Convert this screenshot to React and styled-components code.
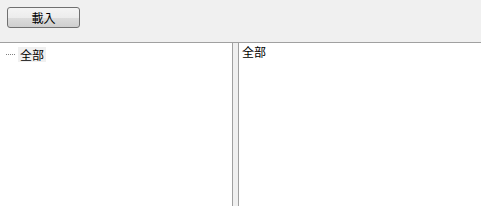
import React from "react";
import styled, { createGlobalStyle } from "styled-components";

const GlobalStyle = createGlobalStyle`
  html, body {
    margin: 0;
    padding: 0;
    background: #ffffff;
  }
  body {
    font-family: "Noto Sans CJK SC", "Noto Sans CJK TC", sans-serif;
    font-size: 12px;
    color: #000;
  }
`;

const Window = styled.div`
  width: 481px;
  height: 216px;
  display: flex;
  flex-direction: column;
  background: #ffffff;
`;

const Toolbar = styled.div`
  height: 43px;
  box-sizing: border-box;
  padding: 7px 0 0 7px;
  background: #f0f0f0;
  border-bottom: 1px solid #a0a0a0;
`;

const Button = styled.button`
  display: block;
  width: 73px;
  height: 21px;
  padding: 0;
  border: 1px solid #707070;
  border-radius: 3px;
  background: linear-gradient(to bottom, #f4f4f4 0%, #ececec 50%, #dddddd 51%, #cfcfcf 100%);
  font-family: "Noto Sans CJK TC", "Noto Sans CJK SC", sans-serif;
  font-size: 12px;
  line-height: 19px;
  color: #000;
`;

const Split = styled.div`
  display: flex;
  height: 163px;
`;

const Pane = styled.div`
  box-sizing: border-box;
  width: ${(p) => p.$width || "auto"};
  flex: ${(p) => (p.$grow ? 1 : "none")};
  background: #ffffff;
  border-left: ${(p) => (p.$borderLeft ? "1px solid #a0a0a0" : "none")};
  border-right: ${(p) => (p.$borderRight ? "1px solid #a0a0a0" : "none")};
  padding: ${(p) => p.$pad};
`;

const Splitter = styled.div`
  width: 5px;
  background: #f0f0f0;
`;

const TreeRow = styled.div`
  display: flex;
  align-items: center;
  height: 15px;
`;

const Dots = styled.span`
  width: 9px;
  margin: 0 3px 0 6px;
  border-top: 1px dotted #808080;
`;

const NodeLabel = styled.span`
  background: #f0f0f0;
  padding: 0 2px;
  line-height: 15px;
`;

const ListItem = styled.div`
  line-height: 14px;
`;

export default function App() {
  return (
    <Window>
      <GlobalStyle />
      <Toolbar>
        <Button>載入</Button>
      </Toolbar>
      <Split>
        <Pane $width="233px" $borderRight $pad="4px 0 0 0">
          <TreeRow>
            <Dots />
            <NodeLabel>全部</NodeLabel>
          </TreeRow>
        </Pane>
        <Splitter />
        <Pane $grow $borderLeft $pad="2px 0 0 3px">
          <ListItem>全部</ListItem>
        </Pane>
      </Split>
    </Window>
  );
}
